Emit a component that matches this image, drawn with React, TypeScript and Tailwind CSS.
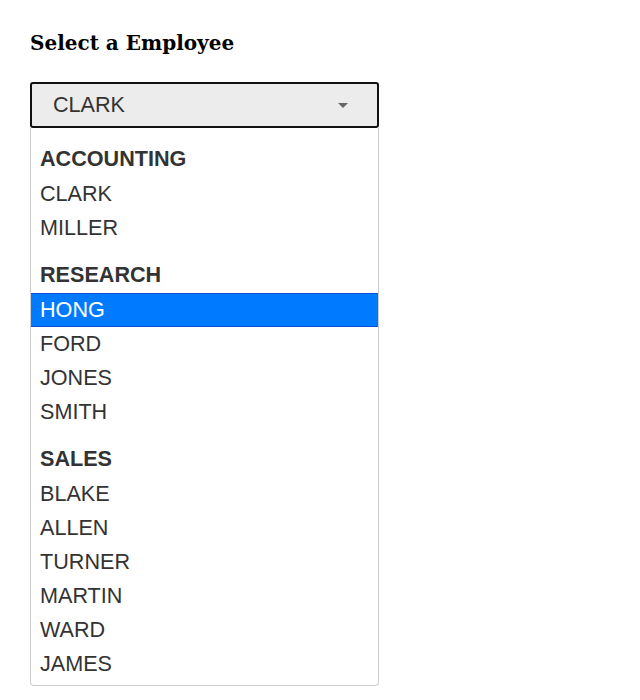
const GROUPS = [
  { label: "ACCOUNTING", items: ["CLARK", "MILLER"] },
  { label: "RESEARCH", items: ["HONG", "FORD", "JONES", "SMITH"] },
  { label: "SALES", items: ["BLAKE", "ALLEN", "TURNER", "MARTIN", "WARD", "JAMES"] },
];

export default function App() {
  const active = "HONG";
  return (
    <div className="min-h-[700px] bg-white px-[30px] pt-[28px]">
      <h3 className="text-[20px] font-bold leading-[30px] text-black [font-family:'DejaVu_Serif',serif]">
        Select a Employee
      </h3>

      <div className="mt-[24px] w-[349px] [font-family:'Liberation_Sans',Arial,sans-serif] text-[21.6px] text-[#333]">
        {/* select box */}
        <div className="flex h-[46px] items-center justify-between rounded-[3px] border-2 border-[#111] bg-[#ececec] pl-[21px] pr-[29px]">
          <span>CLARK</span>
          <span className="h-0 w-0 border-x-[5px] border-t-[5px] border-x-transparent border-t-[#666]" />
        </div>

        {/* open listbox */}
        <div className="rounded-b-[4px] border border-t-0 border-[#ccc] pt-[1px] pb-[4px]">
          {GROUPS.map((g) => (
            <div key={g.label} className="pt-[12px]">
              <div className="flex h-[36px] items-center px-[9px] font-bold">{g.label}</div>
              {g.items.map((name) =>
                name === active ? (
                  <div
                    key={name}
                    className="flex h-[34px] items-center border-y border-[#0b4fd6] bg-[#007bff] px-[9px] text-white"
                  >
                    {name}
                  </div>
                ) : (
                  <div key={name} className="flex h-[34px] items-center px-[9px]">
                    {name}
                  </div>
                )
              )}
            </div>
          ))}
        </div>
      </div>
    </div>
  );
}
